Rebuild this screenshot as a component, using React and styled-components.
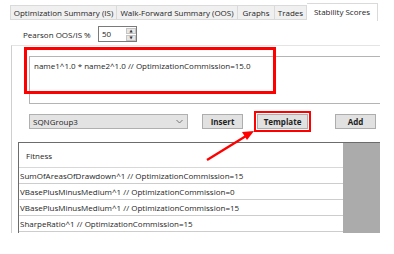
import styled, { createGlobalStyle } from "styled-components";

const GlobalStyle = createGlobalStyle`
  html, body {
    margin: 0;
    padding: 0;
    background: #ffffff;
  }
  body {
    font-family: "Open Sans", "Noto Sans", "DejaVu Sans", sans-serif;
    font-size: 8px;
    color: #1e1e1e;
  }
`;

const Page = styled.div`
  position: relative;
  width: 394px;
  height: 254px;
  overflow: hidden;
`;

const TabStrip = styled.div`
  display: flex;
  align-items: flex-end;
  height: 21px;
  padding-left: 10px;
`;

const Tab = styled.div`
  box-sizing: border-box;
  width: ${(p) => p.w}px;
  height: ${(p) => (p.active ? 18 : 15)}px;
  margin-bottom: ${(p) => (p.active ? 0 : 1)}px;
  display: flex;
  align-items: center;
  justify-content: center;
  white-space: nowrap;
  background: ${(p) => (p.active ? "#ffffff" : "#f0f0f0")};
  border: 1px solid #dadada;
  border-left: ${(p) => (p.first ? "1px solid #dadada" : "none")};
  border-bottom: ${(p) => (p.active ? "none" : "1px solid #dadada")};
  padding-bottom: ${(p) => (p.active ? 3 : 0)}px;
`;

const PearsonRow = styled.div`
  display: flex;
  align-items: center;
  height: 16px;
  margin-top: 5px;
  padding-left: 23px;
  gap: 10px;
`;

const Label = styled.span`
  width: 65px;
  white-space: nowrap;
`;

const Spin = styled.div`
  display: flex;
  box-sizing: border-box;
  width: 39px;
  height: 16px;
  border: 1px solid #7a7a7a;
  background: #fff;
`;

const SpinValue = styled.div`
  flex: 1;
  padding-left: 3px;
  line-height: 13px;
`;

const SpinButtons = styled.div`
  width: 10px;
  display: flex;
  flex-direction: column;
  gap: 1px;
  padding: 1px 0;
`;

const SpinBtn = styled.div`
  flex: 1;
  background: #e6e6e6;
  border: 1px solid #c4c4c4;
  display: flex;
  align-items: center;
  justify-content: center;
  font-size: 4px;
  color: #333;
  line-height: 1;
`;

const Panel = styled.div`
  box-sizing: border-box;
  margin-top: 3px;
  margin-left: 11px;
  width: 369px;
  height: 188px;
  border-left: 1px solid #cfcfcf;
  border-top: 1px solid #e4e4e4;
  padding-top: 10px;
`;

const Formula = styled.div`
  box-sizing: border-box;
  margin-left: 17px;
  height: 48px;
  border-top: 1px solid #b4b4b4;
  border-bottom: 1px solid #b4b4b4;
  border-left: 1px solid #b4b4b4;
  background: #fff;
  padding: 3px 4px;
  white-space: nowrap;
`;

const ControlRow = styled.div`
  display: flex;
  align-items: center;
  margin-top: 10px;
  margin-left: 17px;
  height: 14px;
`;

const Combo = styled.div`
  box-sizing: border-box;
  width: 159px;
  height: 15px;
  display: flex;
  align-items: center;
  justify-content: space-between;
  padding: 0 4px 0 3px;
  background: #e3e3e3;
  border: 1px solid #b0b0b0;
`;

const Button = styled.div`
  box-sizing: border-box;
  width: ${(p) => p.w}px;
  height: 15px;
  margin-left: ${(p) => p.ml}px;
  display: flex;
  align-items: center;
  justify-content: center;
  font-weight: 700;
  background: #e1e1e1;
  border: 1px solid #adadad;
`;

const Highlight = styled.div`
  margin-left: ${(p) => p.ml}px;
  border: 2px solid #ff0000;
  padding: 1px;
  display: flex;
`;

const Grid = styled.div`
  display: grid;
  grid-template-columns: 1fr 37px;
  margin-top: 14px;
  margin-left: 6px;
  height: 90px;
  overflow: hidden;
  border-top: 1px solid #6c6c6c;
`;

const Rows = styled.div`
  display: flex;
  flex-direction: column;
  border-left: 1px solid #6c6c6c;
`;

const HeaderCell = styled.div`
  height: 24px;
  display: flex;
  align-items: center;
  padding-left: 7px;
  border-bottom: 1px solid #d8d8d8;
  flex-shrink: 0;
`;

const Row = styled.div`
  box-sizing: border-box;
  height: 16px;
  display: flex;
  align-items: center;
  padding-left: 1px;
  white-space: nowrap;
  border-bottom: 1px solid #cdcdcd;
  flex-shrink: 0;
`;

const GreyFill = styled.div`
  background: #ababab;
`;

const RedBox = styled.div`
  position: absolute;
  left: 24px;
  top: 47px;
  width: 252px;
  height: 47px;
  box-sizing: border-box;
  border: 3px solid #ff0000;
  pointer-events: none;
`;

const Arrow = styled.svg`
  position: absolute;
  left: 0;
  top: 0;
  pointer-events: none;
`;

const rows = [
  "SumOfAreasOfDrawdown^1 // OptimizationCommission=15",
  "VBasePlusMinusMedium^1 // OptimizationCommission=0",
  "VBasePlusMinusMedium^1 // OptimizationCommission=15",
  "SharpeRatio^1 // OptimizationCommission=15",
  "",
];

const tabs = [
  { label: "Optimization Summary (IS)", w: 107 },
  { label: "Walk-Forward Summary (OOS)", w: 121 },
  { label: "Graphs", w: 37 },
  { label: "Trades", w: 32 },
  { label: "Stability Scores", w: 71, active: true },
];

export default function App() {
  return (
    <>
      <GlobalStyle />
      <Page>
        <TabStrip>
          {tabs.map((t, i) => (
            <Tab key={t.label} w={t.w} active={t.active} first={i === 0}>
              {t.label}
            </Tab>
          ))}
        </TabStrip>
        <PearsonRow>
          <Label>Pearson OOS/IS %</Label>
          <Spin>
            <SpinValue>50</SpinValue>
            <SpinButtons>
              <SpinBtn>▲</SpinBtn>
              <SpinBtn>▼</SpinBtn>
            </SpinButtons>
          </Spin>
        </PearsonRow>
        <Panel>
          <Formula>name1^1.0 * name2^1.0 // OptimizationCommission=15.0</Formula>
          <ControlRow>
            <Combo>
              <span>SQNGroup3</span>
              <svg width="7" height="5" viewBox="0 0 7 5">
                <polyline points="0.5,1 3.5,4 6.5,1" fill="none" stroke="#777" strokeWidth="1" />
              </svg>
            </Combo>
            <Button w={41} ml={14}>Insert</Button>
            <Highlight ml={11}>
              <Button w={51} ml={0}>Template</Button>
            </Highlight>
            <Button w={41} ml={24}>Add</Button>
          </ControlRow>
          <Grid>
            <Rows>
              <HeaderCell>Fitness</HeaderCell>
              {rows.map((r, i) => (
                <Row key={i}>{r}</Row>
              ))}
            </Rows>
            <GreyFill />
          </Grid>
        </Panel>
        <RedBox />
        <Arrow width="394" height="254" viewBox="0 0 394 254">
          <line x1="207" y1="160" x2="246" y2="136" stroke="#ff0000" strokeWidth="2.5" />
          <polygon points="254,131 242,132 247,140" fill="#ff0000" />
        </Arrow>
      </Page>
    </>
  );
}
